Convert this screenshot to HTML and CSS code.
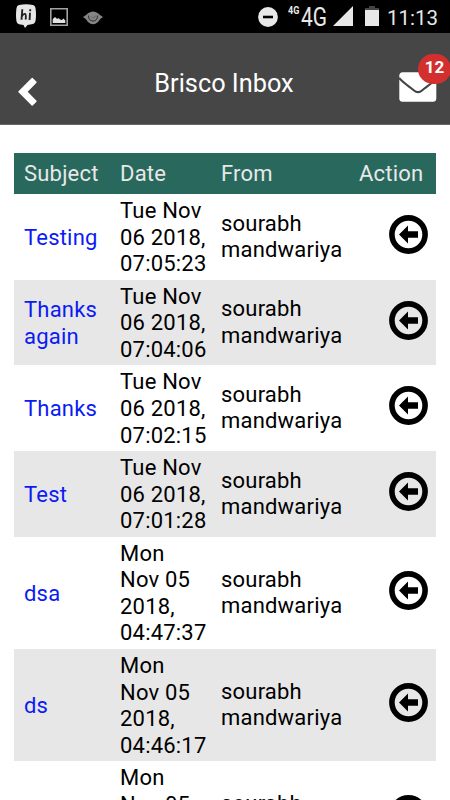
FILE: index.html
```
<!DOCTYPE html>
<html>

<head>
  <title>Brisco Inbox</title>
  <meta charset="utf-8" />
  <link rel="stylesheet" href="styles.css">
</head>

<body>
  <!-- arrow used in every action cell -->
  <svg class="defs" width="0" height="0">
    <symbol id="reply" viewBox="0 0 39 39">
      <circle cx="19.5" cy="19.5" r="16.6" fill="none" stroke="#000" stroke-width="5.600"/>
      <path d="M10 19.500L19 10.500V16.200H29V22.800H19V28.500Z"/>
    </symbol>
  </svg>

  <div class="status-bar">
    <svg class="hike" width="20" height="25" viewBox="0 0 20 25">
      <path d="M3 1Q10-.6 17 1Q19.200 1.600 19.500 4Q20.500 11 19.500 17Q19 19.500 17 20L11.500 21L9 24L7.500 21L3 20.300Q1 19.800.5 17.500Q-.5 11 .5 4Q.8 1.600 3 1Z" fill="#e6e6e6"/>
      <path d="M6.300 5.300L5.500 15.800M5.700 12.500Q7.500 9.500 9 9.900Q10.200 10.200 9.700 15.500M14 8.700L13.600 16M14.200 5.300V7.200" fill="none" stroke="#222" stroke-width="1.900"/>
    </svg>
    <svg class="photo" width="18" height="18" viewBox="0 0 18 18">
      <path d="M.8.8H17.200V17.200H.8Z" fill="none" stroke="#a2a2a2" stroke-width="1.600"/>
      <path d="M2.700 15V11.500Q5 7.500 7 11Q8.500 9.500 10 11.500L12 12L13.500 10.500L15.300 12.500V15Z" fill="#e2e2e2"/>
    </svg>
    <svg class="eye" width="20" height="14" viewBox="0 0 20 14">
      <path d="M0 6Q3 4.500 5 2.300Q10-1.200 15 2.300Q17 4.500 20 6Q17 7.500 15 11Q10 15.500 5 11Q3 7.500 0 6Z" fill="#858585"/>
      <path d="M5.500 4.500Q5.500 10 10 10Q14.500 10 14.500 4.500" fill="none" stroke="#2e2e2e" stroke-width="1"/>
      <path d="M8.500 5.500Q9 7 10.500 7Q12.300 7 12 4.500" fill="none" stroke="#5a5a5a" stroke-width=".8"/>
    </svg>
    <svg class="dnd" width="20" height="20" viewBox="0 0 20 20">
      <circle cx="10" cy="10" r="9.900" fill="#e8e8e8"/>
      <path d="M5 10H15" stroke="#000" stroke-width="2.600"/>
    </svg>
    <span class="net-small">4G</span>
    <span class="net">4G</span>
    <svg class="signal" width="20" height="20" viewBox="0 0 20 20">
      <path d="M20 0V20H0Z" fill="#e8e8e8"/>
    </svg>
    <svg class="battery" width="14" height="20" viewBox="0 0 14 20">
      <path d="M0 2H4V0H10V2H14V4.500H0Z" fill="#444"/>
      <path d="M0 4H14V20H0Z" fill="#e8e8e8"/>
    </svg>
    <span class="clock">11:13</span>
  </div>

  <div class="header">
    <svg class="back" width="20" height="30" viewBox="0 0 20 30">
      <path d="M1 14.800L14.200 1.500L18 5.300L8.700 14.800L18 24.300L14.200 28.100Z" fill="#fff" stroke="#fff" stroke-width="1.400" stroke-linejoin="round"/>
    </svg>
    <div class="title">Brisco Inbox</div>
    <div class="mail">
      <svg width="38" height="30" viewBox="0 0 38 30">
        <rect x=".3" y=".3" width="37" height="29.400" rx="3.500" fill="#fff"/>
        <path d="M0 6C5 11.500 10 14.500 15 18.500Q19 21.700 23 18.500C28 14.500 33 11.500 38 6" fill="none" stroke="#444" stroke-width="2.200"/>
      </svg>
      <span class="badge">12</span>
    </div>
  </div>

  <table class="inbox">
    <thead>
      <tr>
        <th class="subject">Subject</th>
        <th class="date">Date</th>
        <th class="from">From</th>
        <th class="action">Action</th>
      </tr>
    </thead>
    <tbody>
      <tr>
        <td><a>Testing</a></td>
        <td>Tue Nov<br>06 2018,<br>07:05:23</td>
        <td class="name">sourabh mandwariya</td>
        <td><svg class="reply"><use href="#reply"/></svg></td>
      </tr>
      <tr>
        <td><a>Thanks again</a></td>
        <td>Tue Nov<br>06 2018,<br>07:04:06</td>
        <td class="name">sourabh mandwariya</td>
        <td><svg class="reply"><use href="#reply"/></svg></td>
      </tr>
      <tr>
        <td><a>Thanks</a></td>
        <td>Tue Nov<br>06 2018,<br>07:02:15</td>
        <td class="name">sourabh mandwariya</td>
        <td><svg class="reply"><use href="#reply"/></svg></td>
      </tr>
      <tr>
        <td><a>Test</a></td>
        <td>Tue Nov<br>06 2018,<br>07:01:28</td>
        <td class="name">sourabh mandwariya</td>
        <td><svg class="reply"><use href="#reply"/></svg></td>
      </tr>
      <tr>
        <td><a>dsa</a></td>
        <td>Mon<br>Nov 05<br>2018,<br>04:47:37</td>
        <td class="name">sourabh mandwariya</td>
        <td><svg class="reply"><use href="#reply"/></svg></td>
      </tr>
      <tr>
        <td><a>ds</a></td>
        <td>Mon<br>Nov 05<br>2018,<br>04:46:17</td>
        <td class="name">sourabh mandwariya</td>
        <td><svg class="reply"><use href="#reply"/></svg></td>
      </tr>
      <tr>
        <td></td>
        <td>Mon<br>Nov 05<br>2018,<br>&nbsp;</td>
        <td class="name">sourabh mandwariya</td>
        <td><svg class="reply"><use href="#reply"/></svg></td>
      </tr>
    </tbody>
  </table>
</body>

</html>
```

FILE: styles.css
```
* {
  margin: 0px;
  padding: 0px;
  box-sizing: border-box;
}

html {
  height: 800px;
  overflow: hidden;
}

body {
  width: 450px;
  height: 800px;
  overflow: hidden;
  background: #fff;
  color: #000;
  font-family: Roboto, "Liberation Sans", sans-serif;
}

svg {
  display: block;
  flex: none;
}

.defs {
  position: absolute;
}

/* android status bar */
.status-bar {
  display: flex;
  align-items: flex-start;
  height: 33px;
  background: #000;
  color: #e8e8e8;
  white-space: nowrap;
}

.hike {
  margin: 4px 0 0 16px;
}

.photo {
  margin: 8px 0 0 14px;
}

.eye {
  margin: 11px 0 0 15px;
}

.dnd {
  margin: 7px 0 0 155px;
}

.net-small {
  width: 12px;
  margin: 4px 0 0 10px;
  font-size: 11px;
  line-height: 13px;
  font-weight: bold;
  transform: scaleX(0.82);
  transform-origin: left;
}

.net {
  width: 26px;
  margin: 4px 0 0 1px;
  font-size: 25.5px;
  line-height: 26px;
  transform: scaleX(0.82);
  transform-origin: left;
}

.signal {
  margin: 6px 0 0 6px;
}

.battery {
  margin: 6px 0 0 12px;
}

.clock {
  margin: 4px 0 0 8px;
  font-size: 20.5px;
  line-height: 28px;
}

/* title bar */
.header {
  display: flex;
  align-items: flex-start;
  height: 92px;
  padding: 0 13px 0 18px;
  background: #464646;
  border-bottom: 1px solid #666;
  color: #fff;
}

.back {
  margin-top: 44px;
}

.title {
  flex: 1;
  padding: 34px 0 0 11px;
  font-size: 25.3px;
  line-height: 34px;
  text-align: center;
}

.mail {
  position: relative;
  margin-top: 39px;
}

.badge {
  position: absolute;
  top: -18px;
  left: 19px;
  width: 33px;
  height: 30px;
  border-radius: 15px;
  background: #d32f2f;
  font-size: 17px;
  line-height: 27px;
  font-weight: bold;
  text-align: center;
}

/* messages */
.inbox {
  width: 422px;
  margin: 28px 0 0 14px;
  border-collapse: collapse;
  table-layout: fixed;
  font-size: 22px;
  line-height: 26.6px;
  letter-spacing: 0.2px;
}

.inbox th {
  height: 41px;
  padding: 2px 0 0 10px;
  background: #29695d;
  color: #e8e8e8;
  font-weight: normal;
  text-align: left;
}

.inbox td {
  padding: 4px 0 1.9px 10px;
  vertical-align: middle;
}

.inbox td.name {
  padding-top: 3px;
  padding-bottom: 2.4px;
}

.inbox tbody tr:nth-child(even) {
  background: #e7e7e7;
}

.inbox a {
  color: #0b1bf5;
}

.subject {
  width: 96px;
}

.date {
  width: 101px;
}

.from {
  width: 138px;
}

.reply {
  width: 39px;
  height: 39px;
  margin: -7px 0 0 30px;
}
```
